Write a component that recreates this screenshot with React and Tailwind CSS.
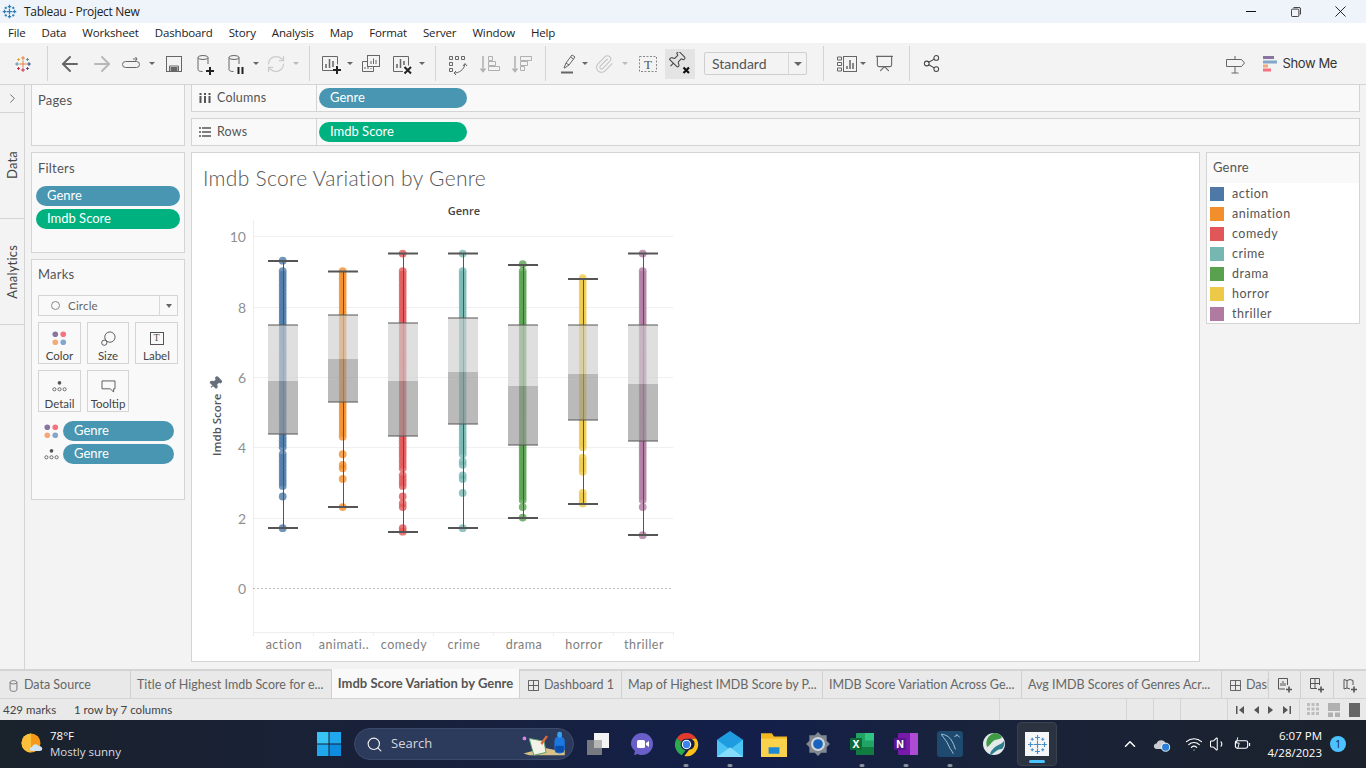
import React from 'react';
import {
  ArrowLeft, ArrowRight, RefreshCw, Share2, ChevronRight, ChevronUp, Search, Wifi, Volume1,
  Paperclip, Presentation,
} from 'lucide-react';

const COLORS = {
  action: '#4e79a7', animation: '#f28e2b', comedy: '#e15759', crime: '#76b7b2',
  drama: '#59a14f', horror: '#edc948', thriller: '#b07aa1',
};

const PIN = 'M12 17v5M9 10.76a2 2 0 0 1-1.11 1.79l-1.78.9A2 2 0 0 0 5 15.24V16a1 1 0 0 0 1 1h12a1 1 0 0 0 1-1v-.76a2 2 0 0 0-1.11-1.79l-1.78-.9A2 2 0 0 1 15 10.76V7a1 1 0 0 1 1-1 2 2 0 0 0 0-4H8a2 2 0 0 0 0 4 1 1 0 0 1 1 1z';

// ranges are imdb scores, [high, low] walked at 0.1
const BOXES = [
  { cx: 283, color: COLORS.action, top: 261, q3: 325, med: 381, q1: 434, bot: 528, dots: [[9.3, 9.3], [9.0, 8.6], [8.5, 4.0], [3.8, 2.9], [2.6, 2.6], [1.7, 1.7]] },
  { cx: 343, color: COLORS.animation, top: 271.5, q3: 315, med: 359, q1: 402, bot: 507, dots: [[9.0, 4.8], [4.7, 4.3], [3.8, 3.8], [3.5, 3.4], [3.1, 3.1], [2.3, 2.3]] },
  { cx: 403, color: COLORS.comedy, top: 253.5, q3: 323, med: 381, q1: 436, bot: 532, dots: [[9.5, 9.5], [9.0, 3.4], [3.2, 3.0], [2.9, 2.9], [2.6, 2.6], [2.4, 2.3], [1.7, 1.6]] },
  { cx: 463, color: COLORS.crime, top: 253.5, q3: 318, med: 372, q1: 424, bot: 528, dots: [[9.5, 9.5], [9.0, 3.8], [3.6, 3.5], [3.2, 3.1], [2.7, 2.7], [1.7, 1.7]] },
  { cx: 523, color: COLORS.drama, top: 265, q3: 325, med: 386, q1: 445, bot: 518, dots: [[9.2, 9.2], [9.0, 2.5], [2.3, 2.3], [2.0, 2.0]] },
  { cx: 583, color: COLORS.horror, top: 279, q3: 325, med: 374, q1: 420, bot: 504, dots: [[8.8, 4.0], [3.7, 3.3], [2.7, 2.4]] },
  { cx: 643, color: COLORS.thriller, top: 253.5, q3: 325, med: 384, q1: 441, bot: 535, dots: [[9.5, 9.5], [9.0, 3.4], [3.3, 2.5], [2.3, 2.3], [1.5, 1.5]] },
];

const yOf = (v) => 588 - 35.2 * v;

const dotValues = (ranges) => {
  const out = [];
  ranges.forEach(([hi, lo]) => {
    for (let v = hi; v >= lo - 0.001; v -= 0.1) out.push(v);
  });
  return out;
};

const Chart = () => (
  <svg viewBox="200 200 490 455" className="w-[490px] h-[455px] ml-[8px] block">
    {[236, 307, 377, 447, 518].map((y) => (
      <line key={y} x1="253" x2="673" y1={y + 0.5} y2={y + 0.5} stroke="#f0f0f0" />
    ))}
    <line x1="253.5" x2="253.5" y1="220" y2="636" stroke="#eeeeee" />
    <line x1="253" x2="673" y1="632.5" y2="632.5" stroke="#eeeeee" />
    {[313, 373, 433, 493, 553, 613, 673].map((x) => (
      <line key={x} x1={x + 0.5} x2={x + 0.5} y1="632" y2="636" stroke="#eeeeee" />
    ))}
    <line x1="253" x2="673" y1="588.5" y2="588.5" stroke="#bdbdbd" strokeDasharray="2 2" />
    {[[10, 242], [8, 313], [6, 383], [4, 453], [2, 524], [0, 594]].map(([v, y]) => (
      <text key={v} x="246" y={y} textAnchor="end" className="font-[Lato,sans-serif] text-[14px]" fill="#909090">{v}</text>
    ))}
    {BOXES.map((b) => (
      <g key={b.cx}>
        {dotValues(b.dots).map((v, i) => (
          <circle key={i} cx={b.cx - 0.3} cy={yOf(v)} r="3.9" fill={b.color} fillOpacity="0.8" />
        ))}
        <line x1={b.cx + 0.5} x2={b.cx + 0.5} y1={b.top} y2={b.bot} stroke="#555555" />
        <rect x={b.cx - 15} y={b.q3} width="30" height={b.med - b.q3} fill="#cfcfcf" fillOpacity="0.67" />
        <rect x={b.cx - 15} y={b.med} width="30" height={b.q1 - b.med} fill="#989898" fillOpacity="0.67" />
        <line x1={b.cx - 15} x2={b.cx + 15} y1={b.q3} y2={b.q3} stroke="#555555" />
        <line x1={b.cx - 15} x2={b.cx + 15} y1={b.q1} y2={b.q1} stroke="#555555" />
        <line x1={b.cx - 15} x2={b.cx + 15} y1={b.top} y2={b.top} stroke="#555555" strokeWidth="2" />
        <line x1={b.cx - 15} x2={b.cx + 15} y1={b.bot} y2={b.bot} stroke="#555555" strokeWidth="2" />
      </g>
    ))}
    {['action', 'animati..', 'comedy', 'crime', 'drama', 'horror', 'thriller'].map((t, i) => (
      <text key={t} x={284 + i * 60} y="649" textAnchor="middle" className="font-[Lato,sans-serif] text-[12.5px] tracking-[0.5px]" fill="#808080">{t}</text>
    ))}
    <text x="464" y="215" textAnchor="middle" className="font-['Open_Sans',sans-serif] text-[11px] font-semibold" fill="#444444">Genre</text>
    <text transform="translate(221 456) rotate(-90)" className="font-['Open_Sans',sans-serif] text-[11.5px] font-semibold" fill="#555555">Imdb Score</text>
    <g transform="translate(208 376) scale(0.6) rotate(45 12 12)">
      <path d={PIN} fill="#66707c" stroke="#66707c" strokeWidth="2" />
    </g>
  </svg>
);

const TableauMark = ({ c = '#2f7fb5', w = 1.2, center = c, className = '' }) => {
  const cross = (x, y, s, col, k) => (
    <path key={k} d={`M${x - s} ${y}h${2 * s}M${x} ${y - s}v${2 * s}`} stroke={col} strokeWidth={w} />
  );
  return (
    <svg viewBox="0 0 24 24" className={className} fill="none">
      {cross(12, 12, 4.5, center, 'c')}
      {cross(12, 4, 2.8, c, 'n')}
      {cross(12, 20, 2.8, c, 's')}
      {cross(4, 12, 2.8, c, 'w')}
      {cross(20, 12, 2.8, c, 'e')}
      {cross(6, 6, 1.8, c, 'a')}
      {cross(18, 6, 1.8, c, 'b')}
      {cross(6, 18, 1.8, c, 'd')}
      {cross(18, 18, 1.8, c, 'f')}
    </svg>
  );
};

const ColorLogo = () => (
  <svg viewBox="0 0 24 24" className="w-[18px] h-[18px]" fill="none" strokeWidth="1.2">
    <path d="M7 12h10M12 7v10" stroke="#e8762b" />
    <path d="M9.5 4h5M12 1.5v5" stroke="#e8762b" />
    <path d="M9.5 20h5M12 17.500v5" stroke="#c72035" />
    <path d="M1.500 12h5M4 9.500v5" stroke="#5b879b" />
    <path d="M17.500 12h5M20 9.500v5" stroke="#1f447e" />
    <path d="M4 6h4M6 4v4" stroke="#e8a32b" />
    <path d="M16 6h4M18 4v4" stroke="#5b879b" />
    <path d="M4 18h4M6 16v4" stroke="#c72035" />
    <path d="M16 18h4M18 16v4" stroke="#59467e" />
  </svg>
);

const Caret = ({ className = '', color = '#666666' }) => (
  <div className={`w-2 flex justify-center ${className}`}>
    <div className="w-0 h-0 border-x-[3px] border-x-transparent border-t-[3px]" style={{ borderTopColor: color }} />
  </div>
);

const Sep = ({ className = '' }) => <div className={`w-px h-[35px] bg-[#d4d4d4] ${className}`} />;

const Ico = ({ className = '', children, s = '#666666' }) => (
  <svg viewBox="0 0 24 24" fill="none" stroke={s} className={`w-6 h-6 shrink-0 ${className}`}>
    {children}
  </svg>
);

const Plus = ({ x, y }) => (
  <path d={`M${x - 4} ${y}h8M${x} ${y - 4}v8`} stroke="#222222" strokeWidth="2" />
);

const Toolbar = () => (
  <div className="h-[41px] bg-[#f3f3f3] flex items-center pl-[14px]">
    <ColorLogo />
    <Sep className="ml-[15px]" />
    <ArrowLeft size={24} strokeWidth={2} color="#666666" className="ml-[10px] shrink-0" />
    <ArrowRight size={24} strokeWidth={2} color="#b8b8b8" className="ml-2 shrink-0" />
    <Ico className="ml-[5px]">
      <rect x="3.500" y="9.500" width="17" height="6" rx="3" />
      <path d="M14 7h4l-1.500-2M18 7l-1.500 2" />
    </Ico>
    <Caret className="ml-[5px]" />
    <Ico className="ml-[6px]">
      <rect x="4.500" y="4.500" width="15" height="15" />
      <path d="M7.500 19v-5h9v5" />
      <rect x="9" y="15.500" width="6" height="4" fill="#666666" />
    </Ico>
    <Ico className="ml-[7px]">
      <ellipse cx="10" cy="5.500" rx="5" ry="2" />
      <path d="M5 5.500v12c0 1.500 2 2 4.500 2M15 5.500v6.500" />
      <Plus x={17} y={19} />
    </Ico>
    <Ico className="ml-[7px]">
      <ellipse cx="10" cy="5.500" rx="5" ry="2" />
      <path d="M5 5.500v12c0 1.500 2 2 4.500 2M15 5.500v6.500" />
      <path d="M14.500 15v7M18.500 15v7" stroke="#222222" strokeWidth="2" />
    </Ico>
    <Caret className="ml-1" />
    <RefreshCw size={20} strokeWidth={1.5} color="#cccccc" className="ml-[6px] mr-[2px] shrink-0" />
    <Caret className="ml-1" color="#bbbbbb" />
    <Sep className="ml-[9px]" />
    <Ico className="ml-[9px]">
      <path d="M15 18.500H3.500v-14h15v8" />
      <path d="M7 16v-4M10.500 16V7M14 15V9" strokeWidth="1.500" />
      <Plus x={18} y={18} />
    </Ico>
    <Caret className="ml-[3px]" />
    <Ico className="ml-[5px]">
      <rect x="8.500" y="3.500" width="12" height="11" fill="#f3f3f3" />
      <path d="M12 12V9M14.500 12V6.500M17 12V8" />
      <path d="M8 9.500H3.500v10h11V15" />
      <path d="M6 17v-2M9 17v-3M12 17v-1" />
    </Ico>
    <Ico className="ml-[7px]">
      <path d="M13 19.500H3.500v-15h15v9" />
      <path d="M7 16v-4M10.500 16V7M14 13V9" strokeWidth="1.500" />
      <path d="M14.500 15l6.500 6.500M21 15l-6.500 6.500" stroke="#222222" strokeWidth="2" />
    </Ico>
    <Caret className="ml-1" />
    <Sep className="ml-[9px]" />
    <Ico className="ml-[9px]">
      <path d="M4.500 4.500h3v3h-3zM10.500 4.500h3v3h-3zM16.500 4.500h3v3h-3zM4.500 10.500h3v3h-3zM4.500 16.500h3v3h-3z" />
      <path d="M9 21c5 0 10-3 11-9M18 14l2-2.500 2 2.500M11 19l-2 2 2 2" />
    </Ico>
    <Ico className="ml-[9px]" s="#b0b0b0">
      <path d="M5 4v15M2.500 16.500L5 19.500l2.500-3" strokeWidth="1.500" />
      <path d="M10.500 4.500h4v4h-4zM10.500 9.500h7v4h-7zM10.500 14.500h11v4h-11z" />
    </Ico>
    <Ico className="ml-2" s="#b0b0b0">
      <path d="M5 4v15M2.500 16.500L5 19.500l2.500-3" strokeWidth="1.500" />
      <path d="M10.500 4.500h11v4h-11zM10.500 9.500h7v4h-7zM10.500 14.500h4v4h-4z" />
    </Ico>
    <Sep className="ml-[11px]" />
    <Ico className="ml-[10px]">
      <path d="M8 16l2-5 6-8 3 2-6 8-4.500 3zM14.500 5l3 2M10 11l3 2" />
      <path d="M5 20.500h12" strokeWidth="2" />
    </Ico>
    <Caret className="ml-px" />
    <Paperclip size={20} strokeWidth={1.3} color="#c4c4c4" className="ml-[5px] mr-[2px] shrink-0" />
    <Caret className="ml-[5px]" color="#bbbbbb" />
    <svg viewBox="0 0 24 24" className="w-6 h-6 ml-[7px] shrink-0" fill="none">
      <rect x="3.500" y="4.500" width="17" height="15" stroke="#888888" strokeDasharray="2 1.500" />
      <text x="12" y="17" textAnchor="middle" fill="#555555" className="font-['Liberation_Serif',serif] text-[13px]">T</text>
    </svg>
    <div className="ml-[5px] w-[30px] h-[30px] bg-[#e4e4e4] flex items-center justify-center shrink-0">
      <Ico>
        <g transform="translate(-1.500 -1.500) scale(0.82) rotate(45 12 12)">
          <path d={PIN} stroke="#444444" strokeWidth="1.300" />
        </g>
        <path d="M15.500 15.500l5.500 5.500M21 15.500l-5.500 5.500" stroke="#111111" strokeWidth="2.200" />
      </Ico>
    </div>
    <div className="ml-[9px] w-[103px] h-[23px] border border-[#cfcfcf] rounded-[2px] flex items-center shrink-0">
      <span className="flex-1 pl-[7px] pb-px font-[Lato,sans-serif] text-[14px] text-[#555555]">Standard</span>
      <div className="w-[18px] h-full border-l border-[#d8d8d8] flex items-center justify-center">
        <div className="w-0 h-0 border-x-[4px] border-x-transparent border-t-[4px] border-t-[#666666]" />
      </div>
    </div>
    <Sep className="ml-4" />
    <Ico className="ml-[11px]">
      <path d="M2.500 5h4v3h-4zM2.500 10.500h4v3h-4zM2.500 16h4v3h-4z" />
      <rect x="8.500" y="4.500" width="13" height="15" />
      <path d="M12 17v-3M15 17V8M18 17v-6" strokeWidth="1.500" />
    </Ico>
    <Caret />
    <Presentation size={19} strokeWidth={1.4} color="#666666" className="ml-[8px] shrink-0" />
    <Sep className="ml-[15px]" />
    <Share2 size={19} strokeWidth={1.3} color="#444444" className="ml-3 shrink-0" />
    <div className="flex-1" />
    <Ico>
      <path d="M3.500 7.500h15l3 3.500-3 3.500h-15zM12 4v3.500M12 14.500V21M8.500 21h7" />
    </Ico>
    <svg viewBox="0 0 14 16" className="w-[14px] h-4 ml-[16px]">
      <rect x="0" y="0" width="11" height="3" fill="#8a74a0" />
      <rect x="0" y="4.500" width="14" height="3" fill="#85a6cc" />
      <rect x="0" y="8.500" width="5" height="3" fill="#f5a878" />
      <rect x="0" y="12.500" width="8" height="3" fill="#f5727f" />
    </svg>
    <span className="ml-[6px] mr-[29px] font-[Inter,sans-serif] text-[13px] tracking-[-0.4px] text-[#333333]">Show Me</span>
  </div>
);

const Pill = ({ children, green = false, className = '' }) => (
  <div className={`h-5 rounded-full flex items-center pl-[11px] text-white font-[Lato,sans-serif] text-[13px] ${green ? 'bg-[#00b180]' : 'bg-[#4996b2]'} ${className}`}>
    {children}
  </div>
);

const Panel = ({ className = '', children }) => (
  <div className={`bg-[#f9f9f9] border border-[#d4d4d4] ${className}`}>{children}</div>
);

const PanelLabel = ({ children }) => (
  <div className="font-[Lato,sans-serif] text-[13px] tracking-[0.2px] text-[#555555] leading-4">{children}</div>
);

const ColorDots = ({ className = '' }) => (
  <svg viewBox="0 0 16 16" className={`w-[15px] h-[15px] ${className}`}>
    <circle cx="3.500" cy="3.500" r="3" fill="#8a74a0" />
    <circle cx="12" cy="3.500" r="3" fill="#f5727f" />
    <circle cx="3.500" cy="12" r="3" fill="#f5a878" />
    <circle cx="12" cy="12" r="3" fill="#85a6cc" />
  </svg>
);

const DetailDots = ({ className = '' }) => (
  <svg viewBox="0 0 16 14" className={`w-[15px] h-[13px] ${className}`} fill="none" stroke="#555555" strokeWidth="0.900">
    <circle cx="8" cy="3" r="2" fill="#555555" stroke="none" />
    <circle cx="2.500" cy="10" r="1.700" />
    <circle cx="8" cy="10" r="1.700" />
    <circle cx="13.500" cy="10" r="1.700" />
  </svg>
);

const MarkBtn = ({ label, className = '', children }) => (
  <div className={`h-[42px] border border-[#d4d4d4] flex flex-col items-center pt-[5px] ${className}`}>
    <div className="h-[20px] flex items-center">{children}</div>
    <span className="font-[Lato,sans-serif] text-[11.5px] text-[#444444] mt-[1px] leading-[14px]">{label}</span>
  </div>
);

const LeftColumn = () => (
  <div className="w-[154px] ml-[6px] flex flex-col gap-[6px] shrink-0">
    <Panel className="h-[62px] pl-[6px] pt-[7px]"><PanelLabel>Pages</PanelLabel></Panel>
    <Panel className="h-[101px] px-1 pt-[7px]">
      <div className="pl-[2px]"><PanelLabel>Filters</PanelLabel></div>
      <Pill className="mt-[10px]">Genre</Pill>
      <Pill green className="mt-[3px]">Imdb Score</Pill>
    </Panel>
    <Panel className="h-[241px] px-[6px] pt-[6px]">
      <PanelLabel>Marks</PanelLabel>
      <div className="mt-[13px] h-[21px] border border-[#d4d4d4] flex items-center">
        <div className="w-[9px] h-[9px] rounded-full border border-[#888888] ml-[12px]" />
        <span className="ml-2 flex-1 font-[Lato,sans-serif] text-[11.5px] text-[#666666] tracking-[0.2px]">Circle</span>
        <div className="w-[18px] h-full border-l border-[#d8d8d8] flex items-center justify-center">
          <div className="w-0 h-0 border-x-[3.500px] border-x-transparent border-t-[4px] border-t-[#666666]" />
        </div>
      </div>
      <div className="mt-[6px] flex gap-[6px]">
        <MarkBtn label="Color" className="w-[43px]"><ColorDots /></MarkBtn>
        <MarkBtn label="Size" className="w-[42px]">
          <svg viewBox="0 0 16 16" className="w-[15px] h-[15px]" fill="none" stroke="#555555">
            <circle cx="9.500" cy="6.500" r="5.500" />
            <circle cx="3.500" cy="12.500" r="2.800" fill="#f9f9f9" />
          </svg>
        </MarkBtn>
        <MarkBtn label="Label" className="w-[43px]">
          <div className="w-[14px] h-[13px] border border-[#555555] flex items-center justify-center font-['Liberation_Serif',serif] text-[10px] text-[#555555] leading-none">T</div>
        </MarkBtn>
      </div>
      <div className="mt-[6px] flex gap-[6px]">
        <MarkBtn label="Detail" className="w-[43px]"><DetailDots /></MarkBtn>
        <MarkBtn label="Tooltip" className="w-[42px]">
          <svg viewBox="0 0 16 14" className="w-[15px] h-[13px]" fill="none" stroke="#555555">
            <path d="M1 1h14v8.500h-1.500v3.500L10 9.500H1z" />
          </svg>
        </MarkBtn>
      </div>
      <div className="mt-[9px] flex items-center">
        <ColorDots className="ml-[6px]" />
        <Pill className="w-[111px] ml-[4px]">Genre</Pill>
      </div>
      <div className="mt-[3px] flex items-center">
        <DetailDots className="ml-[6px]" />
        <Pill className="w-[111px] ml-[4px]">Genre</Pill>
      </div>
    </Panel>
  </div>
);

const Shelf = ({ label, icon, green = false, children }) => (
  <div className="h-[28px] bg-[#f9f9f9] border border-[#d4d4d4] flex items-center">
    <div className="w-[125px] h-full border-r border-[#d4d4d4] flex items-center pl-[7px] gap-[6px] shrink-0">
      {icon}
      <span className="font-[Lato,sans-serif] text-[12.5px] tracking-[0.2px] text-[#555555]">{label}</span>
    </div>
    <Pill green={green} className="w-[148px] ml-[2px]">{children}</Pill>
  </div>
);

const Legend = () => (
  <div className="w-[154px] h-[172px] bg-white border border-[#d4d4d4] shrink-0">
    <div className="h-[30px] bg-[#f9f9f9] pl-[6px] flex items-center font-[Lato,sans-serif] text-[13px] tracking-[0.2px] text-[#555555]">Genre</div>
    <div className="pl-[3px] pt-[1px]">
      {Object.entries(COLORS).map(([name, col]) => (
        <div key={name} className="h-5 flex items-center">
          <div className="w-[14px] h-[14px]" style={{ backgroundColor: col }} />
          <span className="ml-2 font-[Lato,sans-serif] text-[12.5px] tracking-[0.5px] text-[#555555]">{name}</span>
        </div>
      ))}
    </div>
  </div>
);

const SideTabs = () => (
  <div className="w-[25px] border-r border-[#d4d4d4] shrink-0">
    <div className="h-[29px] border-b border-[#d4d4d4] flex items-center justify-center">
      <ChevronRight size={15} strokeWidth={1.5} color="#666666" />
    </div>
    {['Data', 'Analytics'].map((t) => (
      <div key={t} className="h-[106px] border-b border-[#d4d4d4] flex items-center justify-center">
        <span className="[writing-mode:vertical-rl] rotate-180 ml-px font-[Lato,sans-serif] text-[13px] tracking-[0.2px] text-[#444444]">{t}</span>
      </div>
    ))}
  </div>
);

const Main = () => (
  <div className="h-[585px] bg-[#f3f3f3] shadow-[inset_0_1px_0_#d4d4d4] flex">
    <SideTabs />
    <LeftColumn />
    <div className="flex-1 ml-[6px] mr-[6px] flex flex-col gap-[6px]">
      <Shelf
        label="Columns"
        icon={(
          <svg viewBox="0 0 12 12" className="w-3 h-3"><path d="M1.500 1v2M1.500 4v7M6 1v2M6 4v7M10.500 1v2M10.500 4v7" stroke="#555555" strokeWidth="2" /></svg>
        )}
      >
        Genre
      </Shelf>
      <Shelf
        green
        label="Rows"
        icon={(
          <svg viewBox="0 0 12 12" className="w-3 h-3"><path d="M0 2h2M3 2h9M0 6h2M3 6h9M0 10h2M3 10h9" stroke="#555555" strokeWidth="1.500" /></svg>
        )}
      >
        Imdb Score
      </Shelf>
      <div className="flex gap-[6px]">
        <div className="w-[1009px] h-[510px] bg-white border border-[#d4d4d4] shrink-0">
          <div className="h-[47px] pl-[11px] pt-[12px] font-[Lato,sans-serif] font-light text-[21px] leading-[26px] tracking-[0.3px] text-[#555555]">
            Imdb Score Variation by Genre
          </div>
          <Chart />
        </div>
        <Legend />
      </div>
    </div>
  </div>
);

const TabText = 'font-[Lato,sans-serif] text-[12.5px] text-[#666666] whitespace-nowrap overflow-hidden pt-[2px]';

const DashIcon = () => (
  <svg viewBox="0 0 12 12" className="w-[11px] h-[11px] shrink-0" fill="none" stroke="#555555"><path d="M.5.5h11v11H.5zM6 .5v11M.5 6h11" /></svg>
);

const TabBar = () => (
  <div className="h-[30px] bg-[#e9e9e9] border-t-2 border-[#d4d4d4] border-b border-b-[#d4d4d4] flex">
    <div className={`w-[131px] flex items-center pl-[9px] gap-[6px] border-r border-[#d0d0d0] ${TabText}`}>
      <svg viewBox="0 0 10 14" className="w-[9px] h-3 shrink-0" fill="none" stroke="#666666"><path d="M1 3c0-3 8-3 8 0v8c0 3-8 3-8 0zM1 3c0 2 8 2 8 0" /></svg>
      Data Source
    </div>
    <div className={`w-[201px] flex items-center pl-[6px] border-r border-[#d0d0d0] ${TabText}`}>Title of Highest Imdb Score for e...</div>
    <div className="w-[188px] bg-[#f9f9f9] flex items-center justify-center font-[Lato,sans-serif] font-bold text-[13px] text-[#555555] whitespace-nowrap -mt-[2px] pt-[1px] border-r border-[#d0d0d0]">
      Imdb Score Variation by Genre
    </div>
    <div className={`w-[102px] flex items-center pl-2 gap-[5px] border-r border-[#d0d0d0] ${TabText}`}><DashIcon />Dashboard 1</div>
    <div className={`w-[201px] flex items-center pl-[6px] border-r border-[#d0d0d0] ${TabText}`}>Map of Highest IMDB Score by P...</div>
    <div className={`w-[199px] flex items-center pl-[6px] border-r border-[#d0d0d0] ${TabText}`}>IMDB Score Variation Across Ge...</div>
    <div className={`w-[200px] flex items-center pl-[6px] border-r border-[#d0d0d0] ${TabText}`}>Avg IMDB Scores of Genres Acr...</div>
    <div className={`w-[47px] flex items-center pl-2 gap-[5px] border-r border-[#d0d0d0] ${TabText}`}><DashIcon />Dasl</div>
    <div className="w-[32px] flex items-center justify-center border-r border-[#d0d0d0]">
      <svg viewBox="0 0 16 16" className="w-4 h-4" fill="none" stroke="#555555"><path d="M8 12H1.500V1.500h9V8M4 9V6M6 9V4M8 9V6" /><path d="M9 12.500h6M12 9.500v6" strokeWidth="1.600" /></svg>
    </div>
    <div className="w-[33px] flex items-center justify-center border-r border-[#d0d0d0]">
      <svg viewBox="0 0 16 16" className="w-4 h-4" fill="none" stroke="#555555"><path d="M8 11.500H1.500V1.500h9V8M6 1.500v10M1.500 6.500h9" /><path d="M9 12.500h6M12 9.500v6" strokeWidth="1.600" /></svg>
    </div>
    <div className="flex-1 flex items-center justify-center">
      <svg viewBox="0 0 16 16" className="w-4 h-4" fill="none" stroke="#555555"><path d="M8 12l-3-1-3 1V2.500l3 1 3-1 3 1V8M5 3.500V11" /><path d="M9 12.500h6M12 9.500v6" strokeWidth="1.600" /></svg>
    </div>
  </div>
);

const StatusCell = ({ className = '', children }) => (
  <div className={`h-full border-l border-[#d4d4d4] shrink-0 ${className}`}>{children}</div>
);

const StatusBar = () => (
  <div className="h-[21px] bg-[#e9e9e9] flex items-center font-[Lato,sans-serif] text-[11.5px] text-[#444444]">
    <span className="ml-[3px] w-[71px]">429 marks</span>
    <span className="w-[925px]">1 row by 7 columns</span>
    <StatusCell className="w-[127px]" />
    <StatusCell className="w-[27px]" />
    <StatusCell className="w-[27px]" />
    <StatusCell className="w-[47px]" />
    <StatusCell className="w-[72px] flex items-center justify-around px-[4px]">
      <svg viewBox="0 0 8 8" className="w-2 h-2" fill="#555555"><path d="M0 0h1.500v8H0zM8 0v8L3 4z" /></svg>
      <svg viewBox="0 0 8 8" className="w-2 h-2" fill="#555555"><path d="M7 0v8L2 4z" /></svg>
      <svg viewBox="0 0 8 8" className="w-2 h-2" fill="#555555"><path d="M1 0v8l5-4z" /></svg>
      <svg viewBox="0 0 8 8" className="w-2 h-2" fill="#555555"><path d="M8 0H6.500v8H8zM0 0v8l5-4z" /></svg>
    </StatusCell>
    <StatusCell className="flex-1 flex items-center gap-[9px] pl-[7px]">
      <svg viewBox="0 0 12 14" className="w-3 h-[14px]" fill="#bdbdbd"><path d="M0 0h3v3H0zM4.500 0h3v3h-3zM9 0h3v3H9zM0 4.500h3v3H0zM4.500 4.500h3v3h-3zM9 4.500h3v3H9zM0 9h3v3H0zM4.500 9h3v3h-3zM9 9h3v3H9z" /></svg>
      <svg viewBox="0 0 12 14" className="w-3 h-[14px]" fill="#b0b0b0"><path d="M0 0h12v8H0zM0 9.500h5V14H0zM7 9.500h5V14H7z" /></svg>
      <div className="w-[11px] h-[14px] bg-[#666666]" />
    </StatusCell>
  </div>
);

const Dot = () => <div className="absolute bottom-[1px] left-1/2 -translate-x-1/2 w-[5px] h-[3px] rounded-full bg-[#8a8f99]" />;

const TaskIcon = ({ dot = false, className = '', children }) => (
  <div className={`relative w-[44px] h-full flex items-center justify-center shrink-0 ${className}`}>
    {children}
    {dot && <Dot />}
  </div>
);

const Taskbar = () => (
  <div className="h-[48px] bg-[linear-gradient(90deg,#1a222c_0%,#18213a_30%,#131f4a_55%,#19233a_72%,#1b222c_100%)] flex items-center text-white relative">
    <svg viewBox="0 0 24 24" className="w-[24px] h-[24px] ml-[21px] shrink-0">
      <circle cx="10" cy="11" r="9.500" fill="#f59a18" />
      <path d="M10 1.500a9.500 9.500 0 0 0 0 19z" fill="#fbbf3a" />
      <path d="M11 19c-3 0-3-4 0-4 .5-3 5-4 6.500-1 4-.5 5.500 5 1 5z" fill="#cfe3f2" />
    </svg>
    <div className="ml-[5px] w-[267px] font-['Open_Sans',sans-serif] text-[11.5px] leading-[16px]">
      <div>78°F</div>
      <div className="text-[#d8dbe0]">Mostly sunny</div>
    </div>
    <svg viewBox="0 0 24 24" className="w-[24px] h-[24px] shrink-0">
      <path d="M0 0h11.500v11.500H0z" fill="#36c5f5" />
      <path d="M12.500 0H24v11.500H12.500z" fill="#1fa8ee" />
      <path d="M0 12.500h11.500V24H0z" fill="#1fa8ee" />
      <path d="M12.500 12.500H24V24H12.500z" fill="#0e8de0" />
    </svg>
    <div className="ml-[13px] w-[220px] h-[32px] rounded-full bg-[#2c3a5c] border border-[#3d4a6a] flex items-center pl-[11px] shrink-0 relative">
      <Search size={17} strokeWidth={1.6} color="#f1f1f1" />
      <span className="ml-[8px] font-['Open_Sans',sans-serif] text-[13px] text-[#d5d8de]">Search</span>
      <svg viewBox="0 0 52 32" className="absolute right-[1px] top-0 w-[52px] h-[30px]">
        <path d="M2 26l22-6 14 3 8-1v6H8z" fill="#d8c088" />
        <path d="M8 10l16 3 2 12-13 3z" fill="#f2f2e8" stroke="#4f9d69" />
        <path d="M20 15l6-8 2 1-6 9z" fill="#e06a3b" />
        <rect x="35" y="8" width="11" height="18" rx="5" fill="#1a78e0" />
        <rect x="38" y="3" width="5" height="6" rx="2" fill="#3aa0f0" />
        <rect x="36" y="18" width="9" height="7" fill="#0a4fb0" />
        <circle cx="3" cy="10" r="2" fill="#d985e8" />
      </svg>
    </div>
    <TaskIcon className="ml-[2px]">
      <svg viewBox="0 0 24 24" className="w-[24px] h-[24px]">
        <rect x="1" y="8" width="15" height="15" fill="#777a80" />
        <rect x="8" y="1" width="15" height="15" fill="#f4f4f4" />
        <rect x="8" y="8" width="8" height="8" fill="#b4b6b8" />
      </svg>
    </TaskIcon>
    <TaskIcon>
      <svg viewBox="0 0 24 24" className="w-[24px] h-[24px]">
        <path d="M12 1a11 11 0 0 1 0 22c-1 0-3 0-4-1l-4 1 1-4C2 16 1 14 1 12A11 11 0 0 1 12 1z" fill="#6a5fc8" />
        <rect x="7" y="8" width="8" height="8" rx="1.500" fill="#fff" />
        <path d="M16 11l3-2v6l-3-2z" fill="#fff" />
      </svg>
    </TaskIcon>
    <TaskIcon dot>
      <svg viewBox="0 0 24 24" className="w-[25px] h-[25px]">
        <path d="M12 1a11 11 0 0 1 9.500 5.500H12a5.500 5.500 0 0 0-5 3L2.700 6A11 11 0 0 1 12 1z" fill="#e33b2e" />
        <path d="M2.700 6L7 9.500a5.500 5.500 0 0 0 4 8L7.500 22.200A11 11 0 0 1 2.700 6z" fill="#2da94f" />
        <path d="M21.500 6.500A11 11 0 0 1 10 23l4.500-6a5.500 5.500 0 0 0 2-10.500z" fill="#fbc116" />
        <circle cx="12" cy="12" r="4.500" fill="#fff" />
        <circle cx="12" cy="12" r="3.500" fill="#3d83f0" />
      </svg>
    </TaskIcon>
    <TaskIcon dot>
      <svg viewBox="0 0 24 24" className="w-[26px] h-[26px]">
        <path d="M0 8l12-8 12 8v16H0z" fill="#1f9be0" />
        <path d="M0 8l12 9 12-9v16H0z" fill="#4cc3f5" />
        <path d="M0 24l12-9 12 9z" fill="#86dcfa" />
      </svg>
    </TaskIcon>
    <TaskIcon>
      <svg viewBox="0 0 24 24" className="w-[26px] h-[26px]">
        <path d="M0 2h10l2 3h12v19H0z" fill="#f2b81f" />
        <path d="M0 7h24v17H0z" fill="#fbd24c" />
        <rect x="7" y="15" width="10" height="6" fill="#2089d6" />
      </svg>
    </TaskIcon>
    <TaskIcon>
      <svg viewBox="0 0 24 24" className="w-[26px] h-[26px]">
        <path d="M12 1l3 3h5v5l3 3-3 3v5h-5l-3 3-3-3H4v-5l-3-3 3-3V4h5z" fill="#7f8790" />
        <circle cx="12" cy="12" r="6.500" fill="#d0d4d8" />
        <circle cx="12" cy="12" r="4.500" fill="#1565c0" />
      </svg>
    </TaskIcon>
    <TaskIcon dot>
      <svg viewBox="0 0 24 24" className="w-[24px] h-[24px]">
        <rect x="6" y="1" width="18" height="22" rx="1" fill="#21a366" />
        <rect x="15" y="1" width="9" height="7.500" fill="#33c481" />
        <rect x="6" y="15" width="18" height="8" fill="#107c41" />
        <rect x="0" y="6" width="12" height="12" rx="1" fill="#0b6a36" />
        <text x="6" y="15.500" textAnchor="middle" fill="#fff" className="font-[Inter,sans-serif] text-[10px] font-bold">X</text>
      </svg>
    </TaskIcon>
    <TaskIcon dot>
      <svg viewBox="0 0 24 24" className="w-[24px] h-[24px]">
        <rect x="4" y="1" width="20" height="22" rx="1" fill="#7719aa" />
        <rect x="16" y="1" width="8" height="22" fill="#ae4bd5" />
        <rect x="0" y="6" width="12" height="12" rx="1" fill="#5a1490" />
        <text x="6" y="15.500" textAnchor="middle" fill="#fff" className="font-[Inter,sans-serif] text-[10px] font-bold">N</text>
      </svg>
    </TaskIcon>
    <TaskIcon dot>
      <svg viewBox="0 0 24 24" className="w-[26px] h-[26px]">
        <rect x="0" y="0" width="24" height="24" rx="3" fill="#1d4a6e" />
        <path d="M4 3c3 5 5 6 7 11 1 3 3 4 4 7M4 3c2 0 6 1 9 5 2 3 3 6 4 9M18 3l3 3M16 5l3-1" fill="none" stroke="#b9d3e6" strokeWidth="0.800" />
      </svg>
    </TaskIcon>
    <TaskIcon>
      <svg viewBox="0 0 24 24" className="w-[24px] h-[24px]">
        <circle cx="12" cy="12" r="11" fill="#e4e9ea" />
        <path d="M12 1c-6 2-9 8-7 14 3-1 4-5 8-7 3-1 6-1 7-3-2-3-5-4-8-4z" fill="#3f9b45" />
        <path d="M8 23c4-1 6-6 12-6 2-2 3-6 2-8-3 4-8 4-11 8-2 2-3 4-3 6z" fill="#2d7f8f" />
      </svg>
    </TaskIcon>
    <div className="relative w-[40px] h-[44px] ml-[1px] rounded-[4px] bg-[#2b3240] border border-[#3a414f] flex items-center justify-center shrink-0">
      <div className="w-[24px] h-[24px] bg-[#f4f6f8] flex items-center justify-center">
        <TableauMark className="w-[21px] h-[21px]" c="#4a8cc4" w={1.300} />
      </div>
      <div className="absolute bottom-[2px] left-1/2 -translate-x-1/2 w-4 h-[3px] rounded-full bg-[#4cc2ff]" />
    </div>
    <ChevronUp size={18} strokeWidth={2} color="#ffffff" className="ml-[64px] shrink-0" />
    <svg viewBox="0 0 20 16" className="w-[18px] h-[15px] ml-[14px] shrink-0">
      <path d="M4 13c-4 0-4-6 0-6 1-5 9-5 10 0 3 0 4 6 0 6z" fill="#c9ccd1" />
      <circle cx="14" cy="11" r="4.500" fill="#2b7fd6" stroke="#fff" />
    </svg>
    <Wifi size={18} strokeWidth={1.6} color="#ffffff" className="ml-[14px] shrink-0" />
    <Volume1 size={18} strokeWidth={1.4} color="#ffffff" className="ml-[6px] shrink-0" />
    <svg viewBox="0 0 18 14" className="w-[17px] h-[14px] ml-[7px] shrink-0" fill="none" stroke="#ffffff" strokeWidth="1.200">
      <rect x="1.500" y="3.500" width="13" height="8" rx="2" />
      <path d="M16.500 6v3" />
      <path d="M4 0l-1.500 6h3L4 12" strokeWidth="1" />
    </svg>
    <div className="ml-[11px] w-[60px] text-right font-['Open_Sans',sans-serif] text-[11.5px] leading-[17px] shrink-0">
      <div className="whitespace-nowrap">6:07 PM</div>
      <div className="whitespace-nowrap">4/28/2023</div>
    </div>
    <div className="ml-[8px] w-4 h-4 rounded-full bg-[#4cc2ff] text-[#10202e] flex items-center justify-center font-['Open_Sans',sans-serif] text-[10px] shrink-0">1</div>
  </div>
);

export default function App() {
  return (
    <div className="w-[1366px] h-[768px] overflow-hidden bg-[#f3f3f3] font-['Open_Sans',sans-serif]">
      <div className="h-[23px] bg-[#eff3fa] flex items-center">
        <TableauMark className="w-[15px] h-[15px] ml-[2px]" c="#2f7fb5" w={2} />
        <span className="ml-[7px] text-[12px] text-[#222222] tracking-[-0.3px]">Tableau - Project New</span>
        <div className="flex-1" />
        <div className="w-[45px] flex justify-center"><div className="w-[10px] h-px bg-[#111111]" /></div>
        <div className="w-[45px] flex justify-center">
          <svg viewBox="0 0 12 12" className="w-[10px] h-[10px]" fill="none" stroke="#111111"><rect x=".5" y="2.500" width="9" height="9" rx="1.500" /><path d="M3 .5h6.500a2 2 0 0 1 2 2V9" /></svg>
        </div>
        <div className="w-[45px] mr-[3px] flex justify-center">
          <svg viewBox="0 0 12 12" className="w-[11px] h-[11px]" fill="none" stroke="#111111"><path d="M.5.5l11 11M11.500.5l-11 11" /></svg>
        </div>
      </div>
      <div className="h-5 bg-white flex items-center pl-2 gap-4 text-[11.5px] text-[#222222] tracking-[-0.15px]">
        {['File', 'Data', 'Worksheet', 'Dashboard', 'Story', 'Analysis', 'Map', 'Format', 'Server', 'Window', 'Help'].map((m) => (
          <span key={m}>{m}</span>
        ))}
      </div>
      <Toolbar />
      <Main />
      <TabBar />
      <StatusBar />
      <Taskbar />
    </div>
  );
}
